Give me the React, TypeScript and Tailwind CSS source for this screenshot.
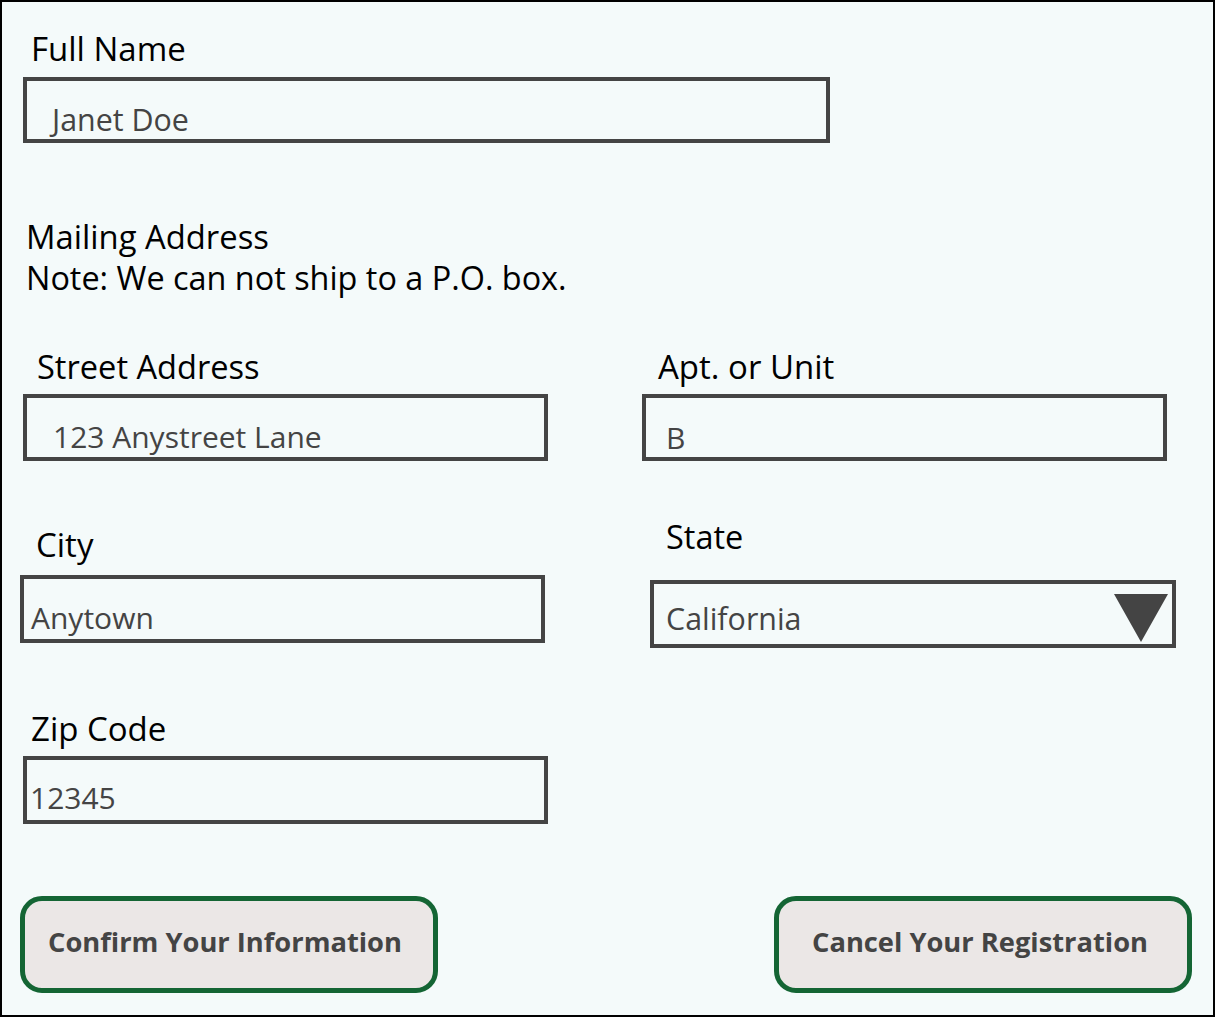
import React from "react";

export default function App() {
  return (
    <div className="w-[1215px] h-[1017px] border-2 border-black bg-[#f4fafa] font-['Open_Sans',sans-serif] flex flex-col">
      {/* Full Name */}
      <div className="mt-[27px] ml-[29px] text-[33px] leading-[40px] text-black">Full Name</div>
      <div className="mt-[8px] ml-[21px] w-[807px] h-[66px] border-4 border-[#444] pt-[24px] pl-[25px]">
        <div className="text-[30.4px] leading-[30px] text-[#444]">Janet Doe</div>
      </div>

      {/* Mailing */}
      <div className="mt-[73px] ml-[24px] leading-[41px] text-black">
        <div className="text-[32.8px]">Mailing Address</div>
        <div className="text-[32.4px]">Note: We can not ship to a P.O. box.</div>
      </div>

      {/* Street / Apt */}
      <div className="mt-[49px] flex items-start">
        <div className="ml-[21px] w-[525px] flex flex-col">
          <div className="ml-[14px] text-[32.6px] leading-[40px] text-black">Street Address</div>
          <div className="mt-[7px] w-[525px] h-[67px] border-4 border-[#444] pt-[24px] pl-[26px]">
            <div className="text-[30px] leading-[30px] text-[#444]">123 Anystreet Lane</div>
          </div>
        </div>
        <div className="ml-[94px] w-[525px] flex flex-col">
          <div className="ml-[16px] text-[33px] leading-[40px] text-black">Apt. or Unit</div>
          <div className="mt-[7px] w-[525px] h-[67px] border-4 border-[#444] pt-[25px] pl-[20px]">
            <div className="text-[30px] leading-[30px] text-[#444]">B</div>
          </div>
        </div>
      </div>

      {/* City / State */}
      <div className="mt-[56px] flex items-start">
        <div className="ml-[18px] w-[525px] pt-[8px] flex flex-col">
          <div className="ml-[16px] text-[33px] leading-[40px] text-black">City</div>
          <div className="mt-[10px] w-[525px] h-[68px] border-4 border-[#444] pt-[24px] pl-[7px]">
            <div className="text-[30px] leading-[30px] text-[#444]">Anytown</div>
          </div>
        </div>
        <div className="ml-[105px] w-[526px] flex flex-col">
          <div className="ml-[16px] text-[32.5px] leading-[40px] text-black">State</div>
          <div className="mt-[23px] w-[526px] h-[68px] border-4 border-[#444] flex items-start justify-between">
            <div className="pt-[20px] pl-[12px] text-[30.4px] leading-[30px] text-[#444]">California</div>
            <svg width="54" height="48" viewBox="0 0 54 48" className="mt-[10px] mr-[4px]">
              <polygon points="0,0 54,0 27,48" fill="#444" />
            </svg>
          </div>
        </div>
      </div>

      {/* Zip */}
      <div className="mt-[61px] ml-[29px] text-[33px] leading-[40px] text-black">Zip Code</div>
      <div className="mt-[7px] ml-[21px] w-[525px] h-[68px] border-4 border-[#444] pt-[23px] pl-[3px]">
        <div className="text-[30px] leading-[30px] text-[#444]">12345</div>
      </div>

      {/* Buttons */}
      <div className="mt-[72px] ml-[18px] mr-[21px] flex justify-between">
        <button className="w-[418px] h-[97px] border-[5px] border-[#146534] rounded-[22px] bg-[#ebe7e6] flex items-center justify-center pr-[8px] pb-[4px] text-[27.3px] font-bold text-[#444] font-['Open_Sans',sans-serif]">
          Confirm Your Information
        </button>
        <button className="w-[418px] h-[97px] border-[5px] border-[#146534] rounded-[22px] bg-[#ebe7e6] flex items-center justify-center pr-[6px] pb-[4px] text-[27.3px] font-bold text-[#444] font-['Open_Sans',sans-serif]">
          Cancel Your Registration
        </button>
      </div>
    </div>
  );
}
